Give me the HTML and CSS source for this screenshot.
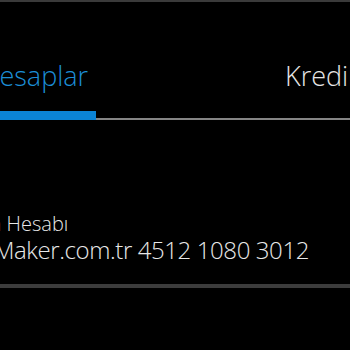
FILE: index.html
```html
<!DOCTYPE html>
<html>
<head>
<meta charset="utf-8">
<link rel="stylesheet" href="styles.css">
</head>
<body>
<div class="topline"></div>
<div class="tabs">
  <div class="tab active">Hesaplar</div>
  <div class="tab">Krediler</div>
</div>
<div class="indicator">
  <div class="ind-blue"></div>
  <div class="ind-rest"></div>
</div>
<div class="account">
  <div class="acc-name">Ana Hesabı</div>
  <div class="acc-no">CardMaker.com.tr 4512 1080 3012</div>
</div>
<div class="divider"></div>
</body>
</html>
```
FILE: styles.css
```css
html, body {
  margin: 0;
  padding: 0;
  background: #000;
  width: 350px;
  height: 350px;
  overflow: hidden;
  font-family: "Open Sans", "DejaVu Sans", sans-serif;
  font-weight: 300;
}
.topline {
  height: 2px;
  background: #3a3a3a;
}
.tabs {
  display: flex;
  height: 107px;
  align-items: flex-end;
  white-space: nowrap;
  overflow: hidden;
}
.tab {
  flex-shrink: 0;
  font-size: 27px;
  line-height: 27px;
  padding-bottom: 20px;
  color: #e6e6e6;
}
.tab.active {
  color: #1c8ed6;
  margin-left: -20px;
  width: 305px;
}
.indicator {
  display: flex;
  align-items: flex-end;
  height: 11px;
}
.ind-blue {
  width: 96px;
  height: 9px;
  background: #0b84d6;
}
.ind-rest {
  flex: 1;
  height: 2px;
  background: #858585;
}
.account {
  padding-top: 92px;
  white-space: nowrap;
  color: #e8e8e8;
  overflow: hidden;
}
.acc-name {
  font-size: 20px;
  line-height: 24px;
  margin-left: -33px;
}
.acc-no {
  font-size: 24px;
  line-height: 28px;
  margin-left: -56px;
  letter-spacing: -0.4px;
}
.divider {
  margin-top: 20px;
  height: 4px;
  background: #3c3c3c;
}
```
